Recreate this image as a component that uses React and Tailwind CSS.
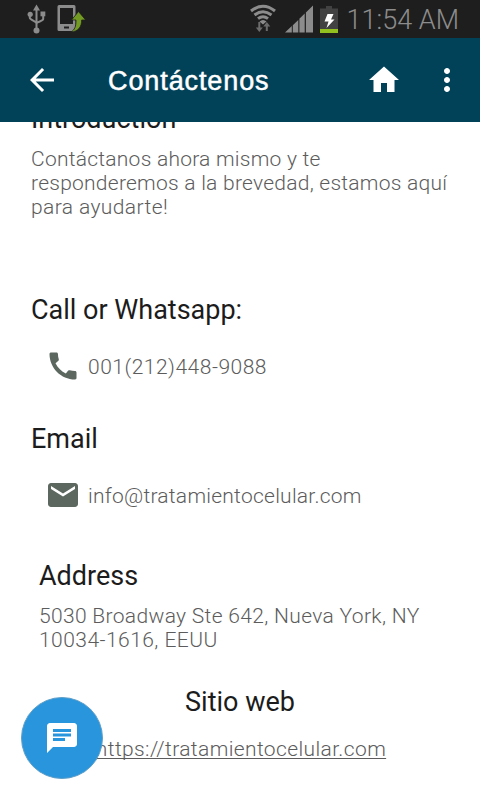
import React from 'react';
import {
  MdArrowBack,
  MdCall,
  MdChat,
  MdEmail,
  MdHome,
  MdMoreVert,
} from 'react-icons/md';

/**
 * Device status bar: notification icons on the left, signal and clock on the right.
 * @returns {JSX.Element}
 */
function StatusBar() {
  return (
    <div className="flex items-center justify-between h-[38px] pl-[27px] pr-[21px] bg-[#1e1e1e] text-[#8c8c8c]">
      <div className="flex items-center gap-[11px]">
        <svg className="w-[19px] h-[30px]" viewBox="0 0 19 30" fill="none" stroke="currentColor" strokeWidth="2">
          <path d="M9.5 5v20M2.8 10.5v3.2c0 2.3 6.7 3.6 6.7 5.8M16.2 10v5c0 2.3-6.7 2.6-6.7 4.8" />
          <path d="M9.5 0.5l3.5 6H6z" fill="currentColor" stroke="none" />
          <circle cx="3.2" cy="10.3" r="2.6" fill="currentColor" stroke="none" />
          <path d="M13.5 7.5h4.8v4.8h-4.8z" fill="currentColor" stroke="none" />
          <circle cx="9.5" cy="26.5" r="3" fill="currentColor" stroke="none" />
        </svg>
        <svg className="w-[29px] h-[30px]" viewBox="0 0 29 30">
          <path
            d="M2 1h15a1.5 1.5 0 0 1 1.5 1.5V25.5a1.5 1.5 0 0 1-1.5 1.5H2a1.5 1.5 0 0 1-1.5-1.5V2.5A1.5 1.5 0 0 1 2 1zM3 4v16h13V4zM7 22.5v2h5v-2z"
            fill="currentColor"
            fillRule="evenodd"
          />
          <path
            d="M21.5 7.5l7.2 8.5h-4c0 7-3.5 11.5-10.7 12 3.5-2 5.2-5.5 5-12h-4.5z"
            fill="#739a22"
            stroke="#1e1e1e"
            strokeWidth="0.8"
          />
        </svg>
      </div>

      <div className="flex items-center">
        <svg className="w-[28px] h-[30px] mr-[7px]" viewBox="0 0 28 30" fill="none" stroke="currentColor" strokeWidth="3">
          <path d="M1 7Q13 -2.5 25 7M4.5 11Q13 4.5 21.5 11M8 14.6Q13 10.8 18 14.6" />
          <path d="M9.5 17.4Q13 14.4 16.5 17.4L13 20.5z" fill="currentColor" stroke="none" />
          <path d="M9.3 18v7M16.8 27v-6" stroke="#6c6c6c" strokeWidth="2" />
          <path d="M5.8 23.5h7L9.3 28zM13.3 22.5h7l-3.5-4.5z" fill="#6c6c6c" stroke="none" />
        </svg>
        <svg className="w-[28px] h-[28px] mr-[7px]" viewBox="0 0 28 28" fill="currentColor">
          <path d="M0 27.5l6.8-6.4v6.4zM7.8 20.2l5.5-5.3v12.6H7.8zM14.4 13.8l5.3-5.2v18.9h-5.3zM20.9 7.4L28 .5v27h-7.1z" />
        </svg>
        <svg className="w-[18px] h-[28px] mr-[9px]" viewBox="0 0 18 28">
          <path d="M6 1h6v2.5h6V28H0V3.5h6z" fill="#424242" />
          <path d="M0 24h18v4H0z" fill="#93c01f" />
          <path d="M7.5 9h6L11 14.5h3.5L6.5 23l2-6.5H4.5z" fill="#fff" />
        </svg>
        <span className="pt-0.5 font-['Roboto'] font-light text-[27px] leading-[36px] whitespace-nowrap">
          11:54 AM
        </span>
      </div>
    </div>
  );
}

/**
 * App bar with back navigation, page title and actions.
 * @returns {JSX.Element}
 */
function AppBar() {
  return (
    <header className="flex items-center h-[84px] pl-6 pr-[15px] bg-[#024259] text-white">
      <button type="button" aria-label="Back">
        <MdArrowBack className="w-9 h-9" />
      </button>
      <h1 className="flex-1 ml-12 pt-0.5 font-['Liberation_Sans'] text-[27px] leading-8 tracking-[0.9px] [-webkit-text-stroke:0.5px_white]">
        Contáctenos
      </h1>
      <button type="button" aria-label="Home" className="mr-[27px]">
        <MdHome className="w-9 h-9" />
      </button>
      <button type="button" aria-label="More">
        <MdMoreVert className="w-9 h-9" />
      </button>
    </header>
  );
}

function App() {
  return (
    <div className="relative flex flex-col w-full h-[800px] overflow-hidden bg-white font-['Roboto',sans-serif]">
      <StatusBar />
      <AppBar />

      <main className="flex-1 overflow-hidden px-[31px] text-[21px] leading-6 font-light tracking-[0.25px] text-[#5c5c5c]">
        <section>
          <h2 className="-mt-[19px] text-[27px] leading-8 font-normal tracking-normal text-[#1c1c1c]">
            Introduction
          </h2>
          <p className="mt-3 whitespace-nowrap">
            Contáctanos ahora mismo y te
            <br />
            responderemos a la brevedad, estamos aquí
            <br />
            <span className="tracking-[0.4px]">para ayudarte!</span>
          </p>
        </section>

        <section className="mt-[75px]">
          <h2 className="text-[27px] leading-8 font-normal tracking-normal text-[#1c1c1c]">
            Call or Whatsapp:
          </h2>
          <div className="flex items-center h-6 mt-[29px] pl-[14px]">
            <MdCall className="w-9 h-9 mr-[7px] mb-0.5 text-[#5b675f]" />
            <span className="tracking-[0.5px]">001(212)448-9088</span>
          </div>
        </section>

        <section className="mt-11">
          <h2 className="text-[27px] leading-8 font-normal tracking-normal text-[#1c1c1c]">
            Email
          </h2>
          <div className="flex items-center h-6 mt-[29px] pl-[14px]">
            <MdEmail className="w-9 h-9 mr-[7px] mb-0.5 text-[#5b675f]" />
            <span>info@tratamientocelular.com</span>
          </div>
        </section>

        <section className="mt-[52px] pl-2">
          <h2 className="text-[27px] leading-8 font-normal tracking-normal text-[#1c1c1c]">
            Address
          </h2>
          <p className="mt-3 whitespace-nowrap tracking-[0.33px]">
            5030 Broadway Ste 642, Nueva York, NY
            <br />
            <span className="tracking-[0.45px]">10034-1616, EEUU</span>
          </p>
        </section>

        <section className="mt-[34px] text-center">
          <h2 className="text-[27px] leading-8 font-normal tracking-normal text-[#1c1c1c]">
            Sitio web
          </h2>
          <a
            href="#web"
            className="inline-block mt-[19px] pl-0.5 tracking-[0.38px] underline decoration-1 underline-offset-2 [text-decoration-skip-ink:none]"
          >
            https://tratamientocelular.com
          </a>
        </section>
      </main>

      <button
        type="button"
        aria-label="Chat"
        className="absolute left-[21px] bottom-[21px] flex items-center justify-center w-[82px] h-[82px] rounded-full bg-[#2895dc] border border-[#5f9fc9] text-white"
      >
        <MdChat className="w-9 h-9" />
      </button>
    </div>
  );
}

export default App;
